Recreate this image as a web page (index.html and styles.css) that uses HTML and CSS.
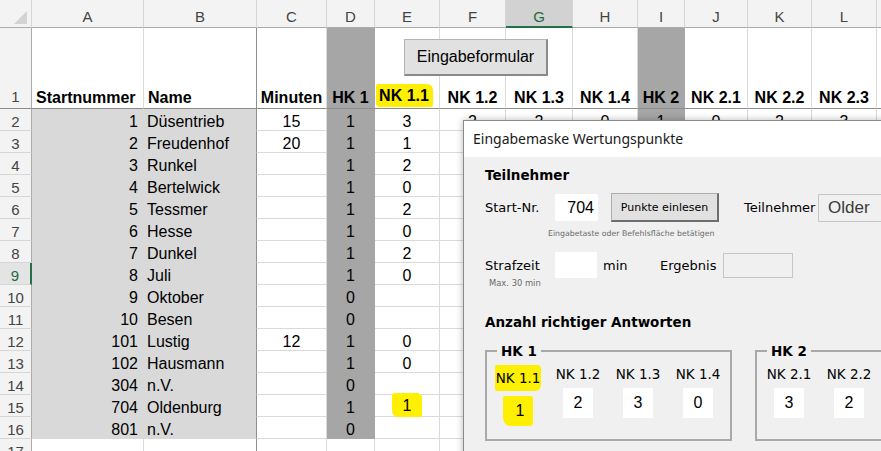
FILE: index.html
```html
<!DOCTYPE html>
<html lang="de">
<head>
<meta charset="utf-8">
<title>Wertungspunkte</title>
<link rel="stylesheet" href="styles.css">
</head>
<body>
<div class="sheet">
  <!-- column headers -->
  <div class="c ch corner"><span class="tri"></span></div>
  <div class="c ch">A</div><div class="c ch">B</div><div class="c ch">C</div><div class="c ch">D</div><div class="c ch">E</div><div class="c ch">F</div><div class="c ch sel">G</div><div class="c ch">H</div><div class="c ch">I</div><div class="c ch">J</div><div class="c ch">K</div><div class="c ch">L</div><div class="c ch"></div>
  <!-- row 1 -->
  <div class="c rh h1">1</div><div class="c h1 hl">Startnummer</div><div class="c h1 hl fz">Name</div><div class="c h1">Minuten</div><div class="c h1 d">HK 1</div><div class="c h1 ov"><span class="mark-h">NK 1.1</span></div><div class="c h1">NK 1.2</div><div class="c h1">NK 1.3</div><div class="c h1">NK 1.4</div><div class="c h1 d">HK 2</div><div class="c h1">NK 2.1</div><div class="c h1">NK 2.2</div><div class="c h1">NK 2.3</div><div class="c h1"></div>
  <!-- row 2 -->
  <div class="c rh">2</div><div class="c g r">1</div><div class="c g l fz">Düsentrieb</div><div class="c">15</div><div class="c d">1</div><div class="c">3</div><div class="c">2</div><div class="c">2</div><div class="c">0</div><div class="c d">1</div><div class="c">0</div><div class="c">2</div><div class="c">3</div><div class="c"></div>
  <!-- row 3 -->
  <div class="c rh">3</div><div class="c g r">2</div><div class="c g l fz">Freudenhof</div><div class="c">20</div><div class="c d">1</div><div class="c">1</div><div class="c"></div><div class="c"></div><div class="c"></div><div class="c d"></div><div class="c"></div><div class="c"></div><div class="c"></div><div class="c"></div>
  <!-- row 4 -->
  <div class="c rh">4</div><div class="c g r">3</div><div class="c g l fz">Runkel</div><div class="c"></div><div class="c d">1</div><div class="c">2</div><div class="c"></div><div class="c"></div><div class="c"></div><div class="c d"></div><div class="c"></div><div class="c"></div><div class="c"></div><div class="c"></div>
  <!-- row 5 -->
  <div class="c rh">5</div><div class="c g r">4</div><div class="c g l fz">Bertelwick</div><div class="c"></div><div class="c d">1</div><div class="c">0</div><div class="c"></div><div class="c"></div><div class="c"></div><div class="c d"></div><div class="c"></div><div class="c"></div><div class="c"></div><div class="c"></div>
  <!-- row 6 -->
  <div class="c rh">6</div><div class="c g r">5</div><div class="c g l fz">Tessmer</div><div class="c"></div><div class="c d">1</div><div class="c">2</div><div class="c"></div><div class="c"></div><div class="c"></div><div class="c d"></div><div class="c"></div><div class="c"></div><div class="c"></div><div class="c"></div>
  <!-- row 7 -->
  <div class="c rh">7</div><div class="c g r">6</div><div class="c g l fz">Hesse</div><div class="c"></div><div class="c d">1</div><div class="c">0</div><div class="c"></div><div class="c"></div><div class="c"></div><div class="c d"></div><div class="c"></div><div class="c"></div><div class="c"></div><div class="c"></div>
  <!-- row 8 -->
  <div class="c rh">8</div><div class="c g r">7</div><div class="c g l fz">Dunkel</div><div class="c"></div><div class="c d">1</div><div class="c">2</div><div class="c"></div><div class="c"></div><div class="c"></div><div class="c d"></div><div class="c"></div><div class="c"></div><div class="c"></div><div class="c"></div>
  <!-- row 9 -->
  <div class="c rh rsel">9</div><div class="c g r">8</div><div class="c g l fz">Juli</div><div class="c"></div><div class="c d">1</div><div class="c">0</div><div class="c"></div><div class="c"></div><div class="c"></div><div class="c d"></div><div class="c"></div><div class="c"></div><div class="c"></div><div class="c"></div>
  <!-- row 10 -->
  <div class="c rh">10</div><div class="c g r">9</div><div class="c g l fz">Oktober</div><div class="c"></div><div class="c d">0</div><div class="c"></div><div class="c"></div><div class="c"></div><div class="c"></div><div class="c d"></div><div class="c"></div><div class="c"></div><div class="c"></div><div class="c"></div>
  <!-- row 11 -->
  <div class="c rh">11</div><div class="c g r">10</div><div class="c g l fz">Besen</div><div class="c"></div><div class="c d">0</div><div class="c"></div><div class="c"></div><div class="c"></div><div class="c"></div><div class="c d"></div><div class="c"></div><div class="c"></div><div class="c"></div><div class="c"></div>
  <!-- row 12 -->
  <div class="c rh">12</div><div class="c g r">101</div><div class="c g l fz">Lustig</div><div class="c">12</div><div class="c d">1</div><div class="c">0</div><div class="c"></div><div class="c"></div><div class="c"></div><div class="c d"></div><div class="c"></div><div class="c"></div><div class="c"></div><div class="c"></div>
  <!-- row 13 -->
  <div class="c rh">13</div><div class="c g r">102</div><div class="c g l fz">Hausmann</div><div class="c"></div><div class="c d">1</div><div class="c">0</div><div class="c"></div><div class="c"></div><div class="c"></div><div class="c d"></div><div class="c"></div><div class="c"></div><div class="c"></div><div class="c"></div>
  <!-- row 14 -->
  <div class="c rh">14</div><div class="c g r">304</div><div class="c g l fz">n.V.</div><div class="c"></div><div class="c d">0</div><div class="c"></div><div class="c"></div><div class="c"></div><div class="c"></div><div class="c d"></div><div class="c"></div><div class="c"></div><div class="c"></div><div class="c"></div>
  <!-- row 15 -->
  <div class="c rh">15</div><div class="c g r">704</div><div class="c g l fz">Oldenburg</div><div class="c"></div><div class="c d">1</div><div class="c ov mk"><span class="mark-c">1</span></div><div class="c"></div><div class="c"></div><div class="c"></div><div class="c d"></div><div class="c"></div><div class="c"></div><div class="c"></div><div class="c"></div>
  <!-- row 16 -->
  <div class="c rh">16</div><div class="c g r">801</div><div class="c g l fz">n.V.</div><div class="c"></div><div class="c d">0</div><div class="c"></div><div class="c"></div><div class="c"></div><div class="c"></div><div class="c d"></div><div class="c"></div><div class="c"></div><div class="c"></div><div class="c"></div>
  <!-- row 17 -->
  <div class="c rh">17</div><div class="c"></div><div class="c fz"></div><div class="c"></div><div class="c"></div><div class="c"></div><div class="c"></div><div class="c"></div><div class="c"></div><div class="c"></div><div class="c"></div><div class="c"></div><div class="c"></div><div class="c"></div>

  <button class="form-btn" type="button">Eingabeformular</button>

  <div class="dlg">
    <div class="dlg-title">Eingabemaske Wertungspunkte</div>
    <div class="dlg-body">
      <div class="sec">Teilnehmer</div>
      <div class="frow frow1">
        <span class="lbl w-start">Start-Nr.</span>
        <div class="inp inp-start">704</div>
        <button class="win-btn" type="button">Punkte einlesen</button>
        <span class="lbl w-tn">Teilnehmer</span>
        <div class="dis dis-name">Older</div>
      </div>
      <div class="hint">Eingabetaste oder Befehlsfläche betätigen</div>
      <div class="frow frow2">
        <span class="lbl w-start">Strafzeit</span>
        <div class="inp inp-time"></div>
        <span class="lbl w-min">min</span>
        <span class="lbl w-erg">Ergebnis</span>
        <div class="dis dis-erg"></div>
      </div>
      <div class="max">Max. 30 min</div>
      <div class="sec sec2">Anzahl richtiger Antworten</div>
      <div class="groups">
        <fieldset class="grp grp1">
          <legend>HK 1</legend>
          <div class="nk-row">
            <div class="nk"><span class="nk-lbl mark-l">NK 1.1</span><div class="nk-box mark-b">1</div></div>
            <div class="nk"><span class="nk-lbl">NK 1.2</span><div class="nk-box">2</div></div>
            <div class="nk"><span class="nk-lbl">NK 1.3</span><div class="nk-box">3</div></div>
            <div class="nk"><span class="nk-lbl">NK 1.4</span><div class="nk-box">0</div></div>
          </div>
        </fieldset>
        <fieldset class="grp grp2">
          <legend>HK 2</legend>
          <div class="nk-row">
            <div class="nk"><span class="nk-lbl">NK 2.1</span><div class="nk-box">3</div></div>
            <div class="nk"><span class="nk-lbl">NK 2.2</span><div class="nk-box">2</div></div>
          </div>
        </fieldset>
      </div>
    </div>
  </div>
</div>
</body>
</html>
```
FILE: styles.css
```css
html, body {
  margin: 0;
  padding: 0;
}
body {
  width: 881px;
  height: 451px;
  overflow: hidden;
  background: #ffffff;
  font-family: "Liberation Sans", Arial, sans-serif;
}

/* ---------- spreadsheet ---------- */
.sheet {
  position: relative;
  display: grid;
  grid-template-columns: 32px 112px 113px 70px 48px 65px 66px 67px 65px 47px 63px 64px 65px 60px;
  grid-template-rows: 28px 81px repeat(16, 22px);
  font-size: 16px;
  color: #000;
  width: 881px;
  height: 451px;
  overflow: hidden;
}
.c {
  box-sizing: border-box;
  border-right: 1px solid #dadada;
  border-bottom: 1px solid #dadada;
  padding: 4px 3px 0;
  line-height: 18px;
  text-align: center;
  white-space: nowrap;
  overflow: hidden;
}
.ov { overflow: visible; }
.r { text-align: right; padding-right: 5px; }
.l { text-align: left; padding-left: 3px; }

.ch {
  background: #f3f3f3;
  color: #444;
  font-size: 15px;
  padding-top: 8px;
  border-right-color: #d6d6d6;
  border-bottom: 1px solid #ababab;
}
.corner { position: relative; }
.tri {
  position: absolute;
  right: 4px;
  bottom: 3px;
  width: 0;
  height: 0;
  border-left: 13px solid transparent;
  border-bottom: 13px solid #d3d3d3;
}
.sel {
  background: #d2d2d2;
  color: #1e6b41;
  border-bottom: 2px solid #217346;
}
.rh {
  background: #f3f3f3;
  color: #444;
  font-size: 15px;
  padding: 4px 0 0;
  border-right: 1px solid #ababab;
  border-bottom-color: #d6d6d6;
}
.rsel {
  color: #1e6b41;
  background: #e4e4e4;
  border-right: 2px solid #217346;
}
.h1 {
  display: flex;
  align-items: flex-end;
  justify-content: center;
  padding: 0 2px 1px;
  font-weight: bold;
  border-bottom: 1px solid #8c8c8c;
}
.h1.rh { font-weight: normal; padding-bottom: 2px; }
.h1.hl { justify-content: flex-start; padding-left: 4px; }

.g { background: #d9d9d9; border-color: #d9d9d9; }
.d { background: #a6a6a6; border-right-color: #a6a6a6; border-bottom-color: #a6a6a6; }
.h1.d { border-bottom-color: #8c8c8c; }
.fz { border-right: 1px solid #8f8f8f; }
.g.fz { border-right-color: #8f8f8f; }

.mark-h {
  background: #ffef00;
  padding: 3px 4px 2px 3px;
  margin-left: -5px;
  border-radius: 2px 6px 2px 4px;
}
.mk { padding-top: 0; }
.mark-c {
  display: block;
  width: 30px;
  height: 24px;
  margin: -2px auto 0;
  padding-top: 4px;
  box-sizing: border-box;
  line-height: 18px;
  background: #ffef00;
  border-radius: 3px 5px 2px 6px;
}

/* floating sheet button */
.form-btn {
  position: absolute;
  left: 404px;
  top: 39px;
  width: 144px;
  height: 37px;
  margin: 0;
  padding: 0;
  background: #e1e1e1;
  border: 1px solid #b4b4b4;
  border-right: 2px solid #8a8a8a;
  border-bottom: 2px solid #8a8a8a;
  font-family: "Liberation Sans", Arial, sans-serif;
  font-size: 16px;
  color: #000;
}

/* ---------- dialog ---------- */
.dlg {
  position: absolute;
  left: 463px;
  top: 120px;
  width: 440px;
  height: 360px;
  background: #f0f0f0;
  border: 1px solid #8a8a8a;
  box-shadow: 0 0 7px rgba(0, 0, 0, 0.28);
  font-family: "DejaVu Sans", sans-serif;
  font-size: 13px;
  color: #000;
  overflow: hidden;
}
.dlg-title {
  height: 36px;
  line-height: 36px;
  background: #fff;
  padding-left: 9px;
  font-family: "Noto Sans", sans-serif;
  font-size: 14px;
  color: #1a1a1a;
}
.dlg-body {
  padding: 9px 0 0 21px;
}
.sec {
  font-weight: bold;
  line-height: 18px;
  font-size: 13.5px;
}
.sec2 { margin-top: 25px; }

.frow {
  display: flex;
  align-items: center;
}
.frow > * { flex: none; }
.frow1 { margin-top: 9px; height: 29px; }
.frow2 { margin-top: 12px; height: 26px; }
.lbl { white-space: nowrap; font-size: 13px; }
.w-start { width: 70px; }
.w-tn { width: 74px; margin-left: 25px; }
.w-min { width: 57px; margin-left: 6px; }
.w-erg { width: 63px; }

.inp {
  box-sizing: border-box;
  background: #fff;
  font-family: "Liberation Sans", Arial, sans-serif;
  font-size: 16px;
  text-align: right;
  padding-right: 4px;
}
.inp-start { width: 43px; height: 27px; line-height: 27px; }
.inp-time { width: 42px; height: 26px; }

.win-btn {
  box-sizing: border-box;
  margin: 0 0 0 13px;
  width: 108px;
  height: 29px;
  padding: 0;
  background: #e1e1e1;
  border: 1px solid #adadad;
  border-right: 2px solid #6e6e6e;
  border-bottom: 2px solid #6e6e6e;
  font-family: "DejaVu Sans", sans-serif;
  font-size: 11px;
  color: #000;
}
.dis {
  box-sizing: border-box;
  background: #f0f0f0;
  border: 1px solid #c6c6c6;
}
.dis-name {
  width: 110px;
  height: 28px;
  line-height: 26px;
  padding-left: 9px;
  font-family: "Liberation Sans", Arial, sans-serif;
  font-size: 17px;
  color: #3a3a3a;
}
.dis-erg { width: 70px; height: 25px; }

.hint {
  margin: 6px 0 0 63px;
  line-height: 12px;
  font-size: 7.8px;
  color: #6a6a6a;
}
.max {
  margin-left: 4px;
  line-height: 10px;
  font-size: 8.4px;
  color: #6a6a6a;
}

.groups {
  display: flex;
  gap: 23px;
  margin-top: 11px;
}
.grp {
  flex: none;
  margin: 0;
  padding: 0 4px 13px 0;
  border: 2px solid #a9a9a9;
  min-width: 0;
  box-sizing: border-box;
}
.grp1 { width: 247px; }
.grp2 { width: 250px; }
.grp legend {
  margin-left: 10px;
  padding: 0 4px;
  font-weight: bold;
  font-size: 13.5px;
  line-height: 18px;
}
.nk-row {
  display: flex;
  padding-left: 1px;
}
.grp2 .nk-row { padding-left: 2px; }
.nk {
  flex: none;
  width: 60px;
  display: flex;
  flex-direction: column;
  align-items: center;
}
.nk-lbl {
  margin-top: 5px;
  line-height: 18px;
  white-space: nowrap;
  font-size: 13.5px;
}
.nk-box {
  margin-top: 5px;
  width: 30px;
  height: 30px;
  line-height: 30px;
  background: #fff;
  text-align: center;
  font-family: "Liberation Sans", Arial, sans-serif;
  font-size: 16px;
}
.mark-l {
  background: #ffef00;
  padding: 4px 1px;
  line-height: 18px;
  border-radius: 2px 4px 6px 2px;
}
.mark-b {
  background: #ffef00;
  border-radius: 2px 2px 4px 8px;
  padding-left: 4px;
  box-sizing: border-box;
}
```
